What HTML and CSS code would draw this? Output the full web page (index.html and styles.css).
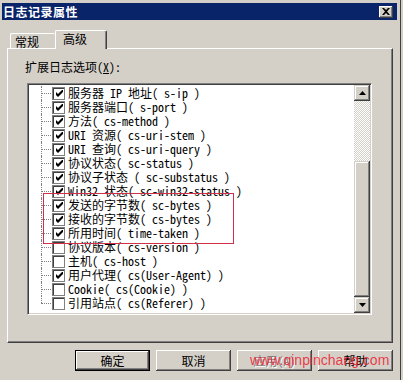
FILE: index.html
```html
<!DOCTYPE html>
<html lang="zh-CN">
<head>
    <meta charset="UTF-8">
    <title>日志记录属性</title>
    <link rel="stylesheet" href="styles.css">
</head>
<body>

<div class="window">
    <div class="titlebar">
        <span class="title">日志记录属性</span>
        <span class="close-btn">
            <svg width="8" height="7" viewBox="0 0 8 7"><path d="M0 0h2l2 2 2-2h2L5 3.5 8 7H6L4 5 2 7H0l3-3.5z" fill="#000"/></svg>
        </span>
    </div>

    <!-- Sekmeler -->
    <div class="tabs">
        <div class="tab">常规</div>
        <div class="tab active">高级</div>
    </div>

    <div class="panel">
        <div class="field-label">扩展日志选项(<u>X</u>):</div>

        <div class="listbox">
            <ul class="tree">
                <li><span class="check"><svg viewBox="0 0 7 7"><path d="M0 2l2 2 5-5v3L2 7 0 5z" fill="#000"/></svg></span>服务器 IP 地址( s-ip )</li>
                <li><span class="check"><svg viewBox="0 0 7 7"><path d="M0 2l2 2 5-5v3L2 7 0 5z" fill="#000"/></svg></span>服务器端口( s-port )</li>
                <li><span class="check"><svg viewBox="0 0 7 7"><path d="M0 2l2 2 5-5v3L2 7 0 5z" fill="#000"/></svg></span>方法( cs-method )</li>
                <li><span class="check"><svg viewBox="0 0 7 7"><path d="M0 2l2 2 5-5v3L2 7 0 5z" fill="#000"/></svg></span>URI 资源( cs-uri-stem )</li>
                <li><span class="check"><svg viewBox="0 0 7 7"><path d="M0 2l2 2 5-5v3L2 7 0 5z" fill="#000"/></svg></span>URI 查询( cs-uri-query )</li>
                <li><span class="check"><svg viewBox="0 0 7 7"><path d="M0 2l2 2 5-5v3L2 7 0 5z" fill="#000"/></svg></span>协议状态( sc-status )</li>
                <li><span class="check"><svg viewBox="0 0 7 7"><path d="M0 2l2 2 5-5v3L2 7 0 5z" fill="#000"/></svg></span>协议子状态 ( sc-substatus )</li>
                <li><span class="check"><svg viewBox="0 0 7 7"><path d="M0 2l2 2 5-5v3L2 7 0 5z" fill="#000"/></svg></span>Win32 状态( sc-win32-status )</li>
                <li><span class="check"><svg viewBox="0 0 7 7"><path d="M0 2l2 2 5-5v3L2 7 0 5z" fill="#000"/></svg></span>发送的字节数( sc-bytes )</li>
                <li><span class="check"><svg viewBox="0 0 7 7"><path d="M0 2l2 2 5-5v3L2 7 0 5z" fill="#000"/></svg></span>接收的字节数( cs-bytes )</li>
                <li><span class="check"><svg viewBox="0 0 7 7"><path d="M0 2l2 2 5-5v3L2 7 0 5z" fill="#000"/></svg></span>所用时间( time-taken )</li>
                <li><span class="check"></span>协议版本( cs-version )</li>
                <li><span class="check"></span>主机( cs-host )</li>
                <li><span class="check"><svg viewBox="0 0 7 7"><path d="M0 2l2 2 5-5v3L2 7 0 5z" fill="#000"/></svg></span>用户代理( cs(User-Agent) )</li>
                <li><span class="check"></span>Cookie( cs(Cookie) )</li>
                <li><span class="check"></span>引用站点( cs(Referer) )</li>
            </ul>
            <!-- isaretli alan -->
            <div class="mark-box"></div>

            <div class="scrollbar">
                <div class="sb-btn">
                    <svg width="7" height="4" viewBox="0 0 7 4"><path d="M3.5 0L7 4H0z" fill="#000"/></svg>
                </div>
                <div class="sb-track"></div>
                <div class="sb-thumb"></div>
                <div class="sb-btn">
                    <svg width="7" height="4" viewBox="0 0 7 4"><path d="M0 0h7L3.5 4z" fill="#000"/></svg>
                </div>
            </div>
        </div>
    </div>

    <div class="buttons">
        <button class="btn default">确定</button>
        <button class="btn">取消</button>
        <button class="btn disabled">应用(A)</button>
        <button class="btn">帮助</button>
        <span class="watermark">www.qinpinchang.com</span>
    </div>
</div>

</body>
</html>
```

FILE: styles.css
```css
body {
    margin: 0;
    background-color: #d4d0c8;
    font-family: "Noto Sans Mono CJK SC", "Noto Sans CJK SC", monospace;
    font-size: 12px;
    color: #000;
}
.window {
    width: 400px;
    height: 380px;
    border-right: 1px solid #404040;
    overflow: hidden;
}
.titlebar {
    height: 17px;
    margin: 3px 3px 0 2px;
    padding: 0 4px 0 1px;
    background-color: #0a246a;
    display: flex;
    align-items: center;
    justify-content: space-between;
}
.title {
    color: white;
    font-weight: bold;
    letter-spacing: 0.5px;
    line-height: 17px;
}
.close-btn {
    width: 14px;
    height: 12px;
    box-sizing: border-box;
    background-color: #d4d0c8;
    box-shadow: inset -1px -1px #404040, inset 1px 1px #fff, inset -2px -2px #808080;
    display: flex;
    align-items: center;
    justify-content: center;
}
.tabs {
    display: flex;
    align-items: flex-end;
    height: 18px;
    margin-top: 10px;
    padding-left: 10px;
}
.tab {
    width: 45px;
    height: 15px;
    box-sizing: border-box;
    padding-left: 4px;
    line-height: 16px;
    border-top: 1px solid #fff;
    border-left: 1px solid #fff;
    border-radius: 2px 2px 0 0;
}
.tab.active {
    width: 52px;
    height: 19px;
    margin-bottom: -1px;
    padding-left: 7px;
    line-height: 16px;
    border-right: 1px solid #404040;
    box-shadow: inset -1px 0 #808080;
    background-color: #d4d0c8;
    position: relative;
    z-index: 1;
}
.panel {
    width: 386px;
    height: 295px;
    margin-left: 7px;
    box-sizing: border-box;
    padding: 11px 0 0 17px;
    border: 1px solid;
    border-color: #fff #404040 #404040 #fff;
    box-shadow: inset -1px -1px #808080;
}
.field-label {
    line-height: 14px;
    height: 14px;
}
.field-label u {
    text-decoration-thickness: 1px;
}
.listbox {
    width: 345px;
    height: 232px;
    margin: 9px 0 0 2px;
    box-sizing: border-box;
    padding: 1px;
    border: 1px solid;
    border-color: #808080 #fff #fff #808080;
    box-shadow: inset 1px 1px #404040, inset -1px -1px #d4d0c8;
    display: flex;
    position: relative;
}
.tree {
    flex: 1;
    list-style: none;
    margin: 0;
    padding: 1px 0 0 0;
    background-color: #fff;
}
.tree li {
    height: 14px;
    line-height: 14px;
    padding-left: 23px;
    display: flex;
    align-items: center;
    white-space: nowrap;
    position: relative;
}
.tree li::before {
    content: "";
    position: absolute;
    left: 12px;
    top: 7px;
    width: 10px;
    border-top: 1px dotted #808080;
}
.tree li::after {
    content: "";
    position: absolute;
    left: 12px;
    top: 0;
    height: 14px;
    border-left: 1px dotted #808080;
}
.tree li:last-child::after {
    height: 7px;
}
.check {
    width: 13px;
    height: 13px;
    box-sizing: border-box;
    margin-right: 3px;
    border: 1px solid #808080;
    box-shadow: inset 1px 1px #404040;
    background-color: #fff;
    display: flex;
    align-items: center;
    justify-content: center;
}
.check svg {
    width: 7px;
    height: 7px;
    margin: 1px 0 0 1px;
}
.mark-box {
    position: absolute;
    left: 15px;
    top: 109px;
    width: 189px;
    height: 49px;
    border: 1px solid #d0304a;
}
.scrollbar {
    width: 16px;
    display: flex;
    flex-direction: column;
}
.sb-btn {
    height: 16px;
    flex: none;
    background-color: #d4d0c8;
    box-shadow: inset -1px -1px #404040, inset 1px 1px #d4d0c8, inset -2px -2px #808080, inset 2px 2px #fff;
    display: flex;
    align-items: center;
    justify-content: center;
}
.sb-track {
    height: 60px;
    flex: none;
    background: conic-gradient(#fff 25%, #d4d0c8 0 50%, #fff 0 75%, #d4d0c8 0) 0 0 / 2px 2px;
}
.sb-thumb {
    flex: 1;
    background-color: #d4d0c8;
    box-shadow: inset -1px -1px #404040, inset 1px 1px #d4d0c8, inset -2px -2px #808080, inset 2px 2px #fff;
}
.buttons {
    display: flex;
    justify-content: flex-end;
    gap: 6px;
    margin-top: 7px;
    padding-right: 7px;
    position: relative;
}
.btn {
    width: 75px;
    height: 21px;
    padding: 0;
    font-family: inherit;
    font-size: 12px;
    color: #000;
    background-color: #d4d0c8;
    border: none;
    box-shadow: inset -1px -1px #404040, inset 1px 1px #fff, inset -2px -2px #808080;
}
.btn.default {
    border: 1px solid #000;
}
.btn.disabled {
    color: #808080;
    text-shadow: 1px 1px #fff;
}
.watermark {
    position: absolute;
    left: 250px;
    top: 1px;
    font-family: "Liberation Sans", Arial, sans-serif;
    font-size: 14px;
    line-height: 18px;
    color: rgba(236, 28, 48, 0.85);
}
```
